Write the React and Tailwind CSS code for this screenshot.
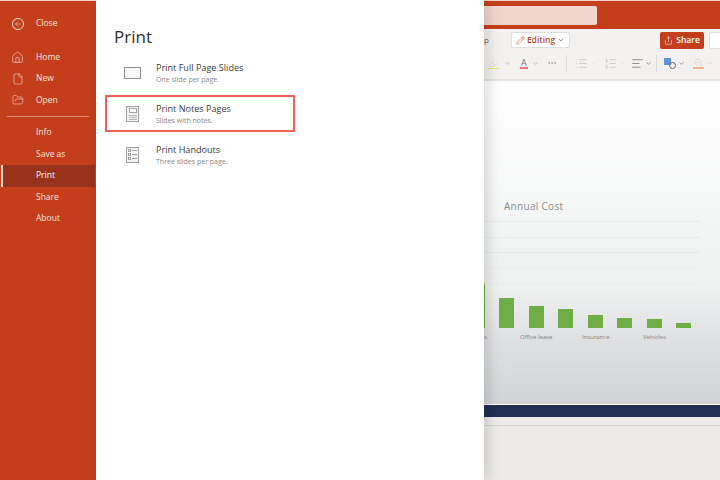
import {
  AlignLeft,
  ArrowLeft,
  ChevronDown,
  File,
  FolderOpen,
  Highlighter,
  Home,
  List,
  ListOrdered,
  MoreHorizontal,
  PaintBucket,
  Pencil,
  Share,
} from "lucide-react";

const font = { fontFamily: '"Open Sans", "Noto Sans", sans-serif' };

function NavItem({ icon, label, active }) {
  return (
    <div
      className={`flex items-center h-[21.5px] text-[8.5px] font-medium ${
        active ? "bg-[#98321a] border-l-2 border-[#f3d9d0] mx-[1px] text-white" : "text-[#f6e3dc]"
      }`}
    >
      <div className={`flex justify-center shrink-0 ${active ? "w-[33px]" : "w-[35px] mr-[1px]"}`}>{icon}</div>
      <span>{label}</span>
    </div>
  );
}

function Sidebar() {
  return (
    <div className="w-[96px] shrink-0 bg-[#c43e1c] border-t border-[#efd5cc] pt-[12px]">
      <NavItem
        label="Close"
        icon={
          <span className="flex w-[12px] h-[12px] items-center justify-center rounded-full border border-[#f6e3dc]">
            <ArrowLeft size={8} strokeWidth={1.5} />
          </span>
        }
      />
      <div className="h-[12px]" />
      <NavItem label="Home" icon={<Home size={13} strokeWidth={1.1} />} />
      <NavItem label="New" icon={<File size={12} strokeWidth={1.1} />} />
      <NavItem label="Open" icon={<FolderOpen size={12} strokeWidth={1.1} />} />
      <div className="h-[1px] bg-[#dd8d76] mx-[7px] my-[5px]" />
      <NavItem label="Info" />
      <NavItem label="Save as" />
      <NavItem label="Print" active />
      <NavItem label="Share" />
      <NavItem label="About" />
    </div>
  );
}

function SlideIcon() {
  return <div className="w-[17px] h-[12px] border border-[#8f8e8d] bg-[#f8f8f8]" />;
}

function NotesIcon() {
  return (
    <div className="w-[13px] h-[16px] border border-[#a3a2a1] bg-[#f3f3f3] flex flex-col items-center gap-[1px] pt-[1px]">
      <div className="w-[8px] h-[5px] border border-[#a3a2a1] bg-white" />
      <div className="w-[8px] h-[1px] mt-[1px] bg-[#b4b4b4]" />
      <div className="w-[8px] h-[1px] bg-[#b4b4b4]" />
      <div className="w-[8px] h-[1px] bg-[#b4b4b4]" />
    </div>
  );
}

function HandoutsIcon() {
  return (
    <div className="w-[13px] h-[16px] border border-[#a3a2a1] bg-[#f3f3f3] flex flex-col items-start gap-[1px] pt-[1px] pl-[1px]">
      {[0, 1, 2].map((i) => (
        <div key={i} className="flex items-center gap-[1px]">
          <div className="w-[3px] h-[3px] border border-[#a3a2a1] bg-white" />
          <div className="w-[5px] h-[1px] bg-[#a3a2a1]" />
        </div>
      ))}
    </div>
  );
}

function PrintOption({ icon, title, sub, selected }) {
  return (
    <div
      className={`flex items-center h-[37px] my-[2px] w-[190px] box-border border-[2px] ${
        selected ? "border-[#f0615c]" : "border-transparent"
      }`}
    >
      <div className="w-[49px] pl-[2px] flex justify-center shrink-0">{icon}</div>
      <div>
        <div className="text-[9.1px] leading-[13px] text-[#3b3a39]">{title}</div>
        <div className="text-[7px] leading-[11px] text-[#8a8886]">{sub}</div>
      </div>
    </div>
  );
}

function PrintPanel() {
  return (
    <div className="w-[388px] shrink-0 bg-white pl-[9px] z-10 shadow-[4px_0_12px_rgba(0,0,0,0.15)]">
      <div className="text-[17px] leading-[24px] pt-[25px] pl-[9px] text-[#2f2e2d] font-medium">Print</div>
      <div className="flex flex-col mt-[3px]">
        <PrintOption icon={<SlideIcon />} title="Print Full Page Slides" sub="One slide per page." />
        <PrintOption icon={<NotesIcon />} title="Print Notes Pages" sub="Slides with notes." selected />
        <PrintOption icon={<HandoutsIcon />} title="Print Handouts" sub="Three slides per page." />
      </div>
    </div>
  );
}

function Ribbon() {
  return (
    <div className="h-[52px] bg-[#f3f2f1] border-b-2 border-[#e4e3e2] shrink-0 text-[#605e5c]">
      <div className="flex items-center h-[22px]">
        <span className="text-[8px] w-[27px] shrink-0">p</span>
        <div className="flex items-center gap-[2px] h-[16px] w-[59px] shrink-0 justify-center bg-white border border-[#e1dfdd] rounded-[2px] text-[#b7472a] text-[8.5px] font-semibold">
          <Pencil size={9} strokeWidth={1.5} />
          Editing
          <ChevronDown size={8} className="text-[#605e5c]" />
        </div>
        <div className="flex items-center justify-center gap-[3px] h-[17px] w-[44px] shrink-0 ml-[90px] bg-[#c43e1c] rounded-[2px] text-white text-[8.5px] font-semibold">
          <Share size={9} strokeWidth={1.5} />
          Share
        </div>
        <div className="h-[17px] w-[20px] shrink-0 ml-[5px] bg-white border border-[#e1dfdd] rounded-l-[2px]" />
      </div>
      <div className="flex items-center h-[24px] text-[#a19f9d]">
        <Highlighter size={11} strokeWidth={1.1} className="ml-[4px] text-[#c8c6c4] border-b border-[#e6e26a]" />
        <ChevronDown size={7} className="ml-[5px]" />
        <span className="ml-[9px] text-[9px] leading-none border-b-2 border-[#e8737a] text-[#7a7877] px-[1px]">A</span>
        <ChevronDown size={7} className="ml-[4px]" />
        <MoreHorizontal size={10} className="ml-[8px]" />
        <div className="w-[1px] h-[17px] bg-[#dedcda] ml-[9px]" />
        <List size={13} strokeWidth={1} className="ml-[8px] text-[#b0aeac]" />
        <ChevronDown size={7} className="ml-[2px] text-[#dedcda]" />
        <ListOrdered size={13} strokeWidth={1} className="ml-[7px] text-[#b0aeac]" />
        <ChevronDown size={7} className="ml-[2px] text-[#dedcda]" />
        <AlignLeft size={13} strokeWidth={1.2} className="ml-[5px] text-[#605e5c]" />
        <ChevronDown size={7} className="ml-[1px] text-[#605e5c]" />
        <div className="w-[1px] h-[17px] bg-[#dedcda] ml-[4px]" />
        <div className="ml-[7px] relative w-[12px] h-[11px]">
          <div className="absolute left-0 top-0 w-[7px] h-[7px] bg-[#5f92d6]" />
          <div className="absolute right-0 bottom-0 w-[7px] h-[7px] rounded-full border border-[#605e5c]" />
        </div>
        <ChevronDown size={7} className="ml-[2px] text-[#605e5c]" />
        <PaintBucket size={11} strokeWidth={1.1} className="ml-[8px] text-[#c8c6c4] border-b-2 border-[#f0b48f]" />
        <ChevronDown size={7} className="ml-[2px] text-[#c8c6c4]" />
      </div>
    </div>
  );
}

const bars = [30, 22, 19, 13, 10, 9, 5];

function Slide() {
  return (
    <div className="h-[323px] shrink-0 flex flex-col bg-[linear-gradient(180deg,#ffffff_0%,#f6f7f7_35%,#eef0f0_65%,#dfe0e2_80%,#d0d4d4_100%)]">
      <div className="text-[10px] leading-[14px] text-[#8c8c8c] mt-[118px] ml-[20px] tracking-[0.3px]">Annual Cost</div>
      <div className="mt-[8px] flex flex-col gap-[14.5px] w-[216px]">
        {[0, 1, 2, 3, 4, 5].map((i) => (
          <div key={i} className="h-[1px] bg-[#e9eaea]" />
        ))}
      </div>
      <div className="flex items-end h-[46px] w-[216px] -mt-[18px]">
        <div className="w-[1px] h-[44px] bg-[#70ad47]" />
        <div className="flex items-end gap-[14.5px] ml-[14px]">
          {bars.map((h, i) => (
            <div key={i} className="w-[15px] bg-[#70ad47]" style={{ height: h }} />
          ))}
        </div>
      </div>
      <div className="flex text-[6px] leading-[9px] text-[#7f7f7f] mt-[5px]">
        <span className="w-[36px]">s</span>
        <span className="w-[62px]">Office lease</span>
        <span className="w-[61px]">Insurance</span>
        <span>Vehicles</span>
      </div>
    </div>
  );
}

export default function App() {
  return (
    <div className="flex w-[720px] h-[480px] overflow-hidden" style={font}>
      <Sidebar />
      <PrintPanel />
      <div className="flex-1 flex flex-col min-w-0 bg-[#ecebe9]">
        <div className="h-[29px] shrink-0 bg-[#c43e1c] border-t border-[#efd5cc] flex items-center">
          <div className="w-[113px] h-[19px] bg-[#f2d5cc] rounded-r-[2px]" />
        </div>
        <Ribbon />
        <Slide />
        <div className="h-[1px] bg-white shrink-0" />
        <div className="h-[12px] bg-[#212f52] shrink-0" />
        <div className="h-[8px] border-b border-[#d2d2d0] shrink-0 box-content" />
      </div>
    </div>
  );
}
